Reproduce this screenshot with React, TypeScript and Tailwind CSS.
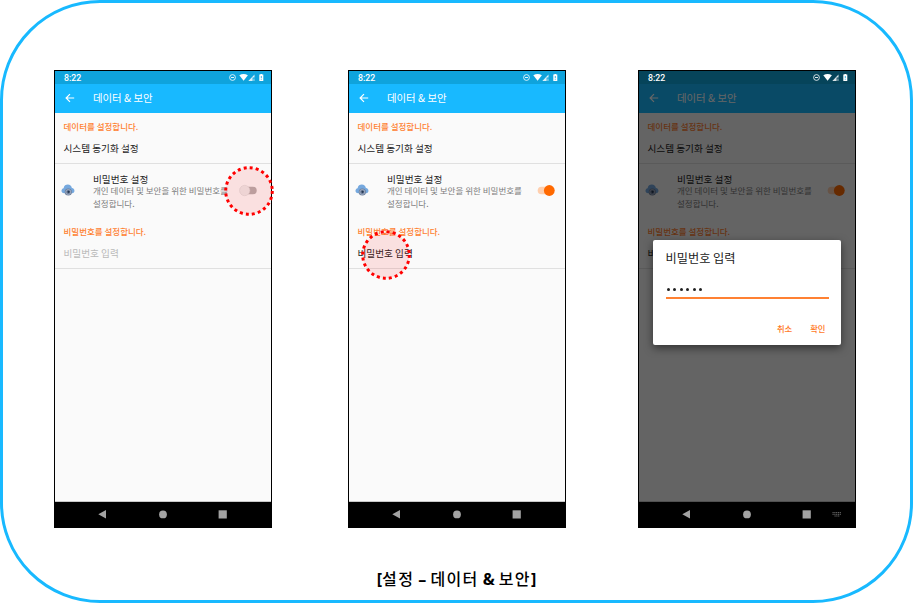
import React from "react";

function StatusBar() {
  return (
    <div className="flex h-[13px] items-center justify-between pl-[9px] pr-[6px] text-white">
      <span className="pt-px font-[Roboto,sans-serif] text-[8.8px] font-medium leading-[13px]">8:22</span>
      <svg width="37" height="9" viewBox="0 0 37 9" fill="none">
        <circle cx="4.5" cy="4.5" r="2.9" stroke="#fff" strokeWidth="0.8" />
        <path d="M3 4.5h3" stroke="#fff" strokeWidth="0.9" />
        <path d="M11.3 2.2Q15.6 -0.2 19.9 2.2L15.6 7.7Z" fill="#fff" />
        <path d="M20.3 7.9L26.5 1.6V4.5H24.6V7.9Z" fill="#fff" fillOpacity="0.85" />
        <path d="M25.4 5.4h1.1v2.5h-1.1z" fill="#fff" fillOpacity="0.6" />
        <path d="M31.3 1.6h1.1V.9h1.8v.7h1.1v6.4h-4z" fill="#fff" />
        <path d="M33.3 3v2.2M33.3 5.9v.8" stroke="#0fa3dc" strokeWidth="0.8" />
      </svg>
    </div>
  );
}

function AppBar() {
  return (
    <div className="flex h-[29px] bg-[#18b9ff] pl-[10px] text-white">
      <svg className="mt-[9px]" width="10" height="10" viewBox="0 0 10 10" fill="none" stroke="#fff" strokeWidth="1.2">
        <path d="M9.2 5H1.2M5 1.1L1.1 5L5 8.9" />
      </svg>
      <span className="ml-[18px] text-[10.4px] leading-[27px]">데이터 &amp; 보안</span>
    </div>
  );
}

function CloudIcon() {
  return (
    <svg className="ml-[6px] shrink-0" width="14" height="13" viewBox="0 0 14 13">
      <path d="M3.2 9.2C-.4 9.2 -.2 4.7 2.6 4.2C3 1.7 4.8 .6 6.8 .6c2.2 0 3.7 1.3 4.1 3.4c3.4 .3 3.3 5 .2 5.2z" fill="#75a8de" />
      <circle cx="7.3" cy="8" r="3.6" fill="#6b7c98" />
      <circle cx="7.3" cy="8" r="2.5" fill="none" stroke="#b3bfd3" strokeWidth="0.7" />
      <circle cx="7.6" cy="7.8" r="1.1" fill="#243751" />
    </svg>
  );
}

function Toggle({ on }: { on: boolean }) {
  return (
    <svg className="mr-[10px] block" width="22" height="13" viewBox="0 0 22 13">
      <rect x="4.7" y="2.7" width={on ? 15 : 13} height="7.6" rx="3.8" fill={on ? "#ffcfae" : "#b5b0b0"} />
      {on ? (
        <circle cx="16.3" cy="6.5" r="5.4" fill="#ff6900" />
      ) : (
        <circle cx="5.7" cy="6.5" r="5.2" fill="#ececec" stroke="#d8d8d8" strokeWidth="0.5" />
      )}
    </svg>
  );
}

function NavBar({ keyboard }: { keyboard?: boolean }) {
  return (
    <svg className="block h-[25px] w-[216px] bg-black" viewBox="0 0 216 25" fill="#a3a3a3">
      <path d="M43.3 12.3L51 8.1V16.5Z" />
      <circle cx="108" cy="12.4" r="3.9" />
      <rect x="163.6" y="8.3" width="8.2" height="8.2" />
      {keyboard && (
        <g stroke="#777" strokeWidth="0.9" strokeDasharray="1.2 0.6">
          <path d="M193.5 10.6h9M193.5 12.3h9M195.5 14h5" />
        </g>
      )}
    </svg>
  );
}

function TapMarker({ className }: { className: string }) {
  return (
    <svg className={"absolute " + className} width="52" height="52" viewBox="0 0 52 52">
      <circle
        cx="26"
        cy="26"
        r="23.3"
        fill="#ff0000"
        fillOpacity="0.1"
        stroke="#ff0000"
        strokeWidth="3"
        strokeDasharray="3 3.1"
      />
    </svg>
  );
}

function PasswordDialog() {
  return (
    <div className="absolute left-[14px] top-[169px] flex h-[105px] w-[188px] flex-col rounded-[2px] bg-white px-[12.5px] shadow-[0_3px_8px_rgba(0,0,0,0.5)]">
      <h2 className="mt-[9px] text-[12.2px] leading-[18px] text-[#212121]">비밀번호 입력</h2>
      <div className="mt-[14px] flex h-[16px] items-center gap-[3.6px] pl-[1px]">
        {[0, 1, 2, 3, 4, 5].map((n) => (
          <span key={n} className="size-[3px] rounded-full bg-[#222]" />
        ))}
      </div>
      <div className="h-[1.5px] w-[163px] shrink-0 bg-[#ff8132]" />
      <div className="mt-[22.5px] flex justify-end gap-[18px] pr-[3px] text-[8.3px] font-medium leading-[14px] text-[#ff7a28]">
        <span>취소</span>
        <span>확인</span>
      </div>
    </div>
  );
}

function Phone({ on, dialog, children }: { on: boolean; dialog?: boolean; children?: React.ReactNode }) {
  return (
    <section className="relative flex h-[458px] w-[218px] flex-col whitespace-nowrap border border-black bg-[#fafafa]">
      <div className={dialog ? "bg-[#06445a]" : "bg-[#0fa3dc]"}>
        <StatusBar />
      </div>
      <AppBar />
      <div className="flex h-[389px] flex-col border-b border-[#c8c8c8]">
        <div className="h-[51px] border-b border-[#e0e0e0] pl-[8.5px]">
          <h3 className="pt-[6px] text-[8.5px] font-medium leading-[14px] text-[#ff8132]">데이터를 설정합니다.</h3>
          <p className="pt-[7px] text-[9.65px] leading-[16px] text-[#222]">시스템 동기화 설정</p>
        </div>
        <div className="flex h-[56px] items-start">
          <div className="pt-[20px]">
            <CloudIcon />
          </div>
          <div className="ml-[18px] w-0 pt-[8px]">
            <p className="text-[9.65px] leading-[14px] text-[#222]">비밀번호 설정</p>
            <p className="-mt-[2px] text-[8.53px] leading-[12.5px] text-[#7c7c7c]">
              개인 데이터 및 보안을 위한 비밀번호를
              <br />
              설정합니다.
            </p>
          </div>
          <div className="ml-auto pt-[20px]">
            <Toggle on={on} />
          </div>
        </div>
        <div className="h-[49px] border-b border-[#e0e0e0] pl-[8.5px]">
          <h3 className="pt-[4px] text-[8.5px] font-medium leading-[14px] text-[#ff8132]">비밀번호를 설정합니다.</h3>
          <p className={"pt-[7px] text-[9.65px] leading-[16px] " + (on ? "text-[#222]" : "text-[#b9b9b9]")}>비밀번호 입력</p>
        </div>
      </div>
      <NavBar keyboard={dialog} />
      {dialog && <div className="absolute inset-x-0 bottom-[25px] top-[13px] bg-black/60" />}
      {dialog && <PasswordDialog />}
      {children}
    </section>
  );
}

export default function App() {
  return (
    <main className="flex h-[603px] w-[913px] flex-col rounded-[100px] border-[3px] border-[#18b9ff] bg-white font-['Noto_Sans_CJK_KR',sans-serif]">
      <div className="flex pl-[51px] pt-[67px]">
        <Phone on={false}>
          <TapMarker className="left-[168px] top-[94px]" />
        </Phone>
        <div className="ml-[76px]">
          <Phone on>
            <TapMarker className="left-[11px] top-[158px]" />
          </Phone>
        </div>
        <div className="ml-[72px]">
          <Phone on dialog />
        </div>
      </div>
      <p className="mt-[40px] text-center font-['Open_Sans','Noto_Sans_CJK_KR',sans-serif] text-[16px] leading-[22px] text-black">
        <b>[</b>
        <span className="font-medium tracking-[1.3px]">설정</span>
        <b> – </b>
        <span className="font-medium tracking-[1.3px]">데이터</span>
        <b> &amp; </b>
        <span className="font-medium tracking-[1.3px]">보안</span>
        <b>]</b>
      </p>
    </main>
  );
}
